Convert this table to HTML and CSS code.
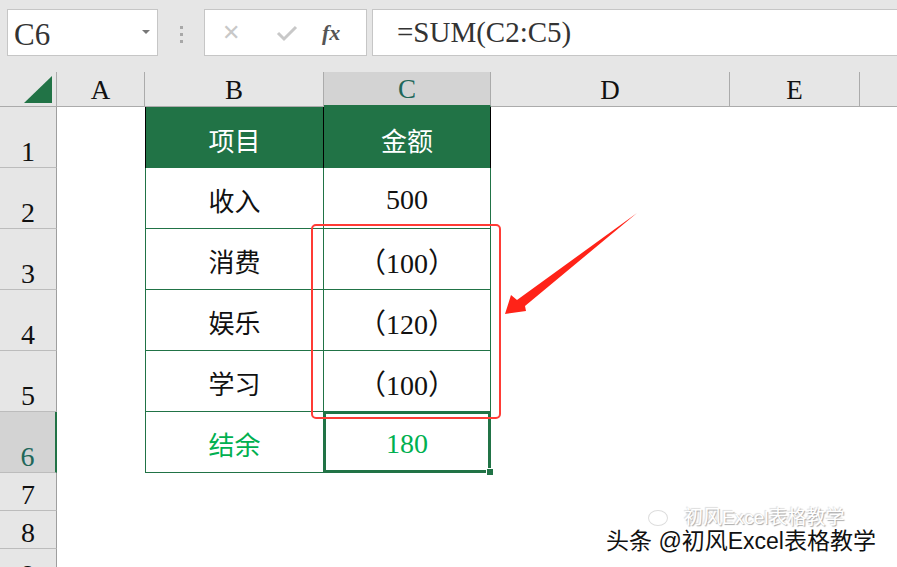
FILE: index.html
```html
<!DOCTYPE html>
<html lang="zh-CN">
<head>
  <meta charset="UTF-8">
  <title>结余 - SUM</title>
  <link rel="stylesheet" href="styles.css">
</head>
<body>

<div class="toolbar">
  <div class="name-box">
    <span>C6</span>
    <span class="caret"></span>
  </div>
  <div class="grip"><i></i><i></i><i></i></div>
  <div class="fx-box">
    <span class="fx-btn off">&#x2715;</span>
    <svg class="fx-btn" width="22" height="18" viewBox="0 0 22 18"><path d="M2 9 L8 15 L20 3" fill="none" stroke="#c8c8c8" stroke-width="3"/></svg>
    <span class="fx-label">fx</span>
  </div>
  <div class="formula">=SUM(C2:C5)</div>
</div>

<div class="sheet">
  <div class="corner"><span class="tri"></span></div>
  <div class="col-head">A</div>
  <div class="col-head">B</div>
  <div class="col-head sel">C</div>
  <div class="col-head">D</div>
  <div class="col-head">E</div>
  <div class="col-head last"></div>

  <div class="row-head">1</div>
  <div class="cell"></div>
  <div class="cell t-head t-left">项目</div>
  <div class="cell t-head">金额</div>
  <div class="cell"></div><div class="cell"></div><div class="cell"></div>

  <div class="row-head">2</div>
  <div class="cell"></div>
  <div class="cell t t-left">收入</div>
  <div class="cell t num">500</div>
  <div class="cell"></div><div class="cell"></div><div class="cell"></div>

  <div class="row-head">3</div>
  <div class="cell"></div>
  <div class="cell t t-left">消费</div>
  <div class="cell t num">（100）</div>
  <div class="cell"></div><div class="cell"></div><div class="cell"></div>

  <div class="row-head">4</div>
  <div class="cell"></div>
  <div class="cell t t-left">娱乐</div>
  <div class="cell t num">（120）</div>
  <div class="cell"></div><div class="cell"></div><div class="cell"></div>

  <div class="row-head">5</div>
  <div class="cell"></div>
  <div class="cell t t-left">学习</div>
  <div class="cell t num">（100）</div>
  <div class="cell"></div><div class="cell"></div><div class="cell"></div>

  <div class="row-head sel">6</div>
  <div class="cell"></div>
  <div class="cell t t-left green">结余</div>
  <div class="cell t num green active">180<span class="handle"></span></div>
  <div class="cell"></div><div class="cell"></div><div class="cell"></div>

  <div class="row-head">7</div>
  <div class="cell"></div><div class="cell"></div><div class="cell"></div><div class="cell"></div><div class="cell"></div><div class="cell"></div>

  <div class="row-head">8</div>
  <div class="cell"></div><div class="cell"></div><div class="cell"></div><div class="cell"></div><div class="cell"></div><div class="cell"></div>

  <div class="row-head last">9</div>
  <div class="cell"></div><div class="cell"></div><div class="cell"></div><div class="cell"></div><div class="cell"></div><div class="cell"></div>
</div>

<!-- annotations drawn over the sheet -->
<div class="mark-box"></div>
<svg class="arrow" width="897" height="567" viewBox="0 0 897 567">
  <polygon points="637,213 517,300 511,295 505,314 526,311 525,306" fill="#ff2318"/>
</svg>

<div class="watermark">
  <div class="ghost"><span class="ghost-icon"></span>初风Excel表格教学</div>
  <div class="credit">头条 @初风Excel表格教学</div>
</div>

</body>
</html>
```

FILE: styles.css
```css
html, body {
  margin: 0;
  height: 567px;
  overflow: hidden;
}

body {
  position: relative;
  background-color: #fff;
  font-family: "Liberation Serif", "Noto Sans CJK SC", serif;
}

/* Formula bar */
.toolbar {
  display: flex;
  align-items: flex-start;
  height: 72px;
  box-sizing: border-box;
  padding: 9px 0 0 7px;
  background-color: #e6e6e6;
}

.name-box {
  display: flex;
  align-items: center;
  justify-content: space-between;
  width: 151px;
  height: 47px;
  box-sizing: border-box;
  padding: 5px 7px 0 6px;
  background-color: #fff;
  border: 1px solid #c6c6c6;
  font-size: 31px;
  color: #333;
}

.caret {
  width: 0;
  height: 0;
  margin-top: -6px;
  border-left: 4px solid transparent;
  border-right: 4px solid transparent;
  border-top: 4px solid #777;
}

.grip {
  display: flex;
  flex-direction: column;
  gap: 4px;
  width: 46px;
  align-items: center;
  padding-top: 17px;
}

.grip i {
  display: block;
  width: 3px;
  height: 3px;
  background-color: #a8a8a8;
}

.fx-box {
  display: flex;
  align-items: center;
  width: 163px;
  height: 47px;
  box-sizing: border-box;
  padding-left: 17px;
  background-color: #fff;
  border: 1px solid #c6c6c6;
}

.fx-btn.off {
  width: 22px;
  font-family: "DejaVu Sans", sans-serif;
  font-size: 22px;
  color: #c8c8c8;
}

svg.fx-btn {
  margin-left: 32px;
}

.fx-label {
  margin-left: 24px;
  font-style: italic;
  font-weight: bold;
  font-size: 22px;
  color: #555;
}

.formula {
  flex: 1;
  height: 47px;
  box-sizing: border-box;
  margin-left: 5px;
  padding: 6px 0 0 24px;
  background-color: #fff;
  border: 1px solid #c6c6c6;
  border-right: none;
  font-size: 29px;
  color: #333;
}

/* Sheet grid */
.sheet {
  display: grid;
  grid-template-columns: 57px 88px 179px 167px 239px 130px 1fr;
  grid-template-rows: 35px repeat(6, 61px) repeat(3, 38px);
}

.corner {
  position: relative;
  background-color: #e6e6e6;
  border-right: 1px solid #ababab;
  border-bottom: 1px solid #ababab;
}

.tri {
  position: absolute;
  right: 4px;
  bottom: 3px;
  width: 0;
  height: 0;
  border-left: 28px solid transparent;
  border-bottom: 27px solid #217346;
}

.col-head {
  display: flex;
  align-items: flex-end;
  justify-content: center;
  padding-bottom: 2px;
  box-sizing: border-box;
  background-color: #e6e6e6;
  border-right: 1px solid #ababab;
  border-bottom: 1px solid #ababab;
  font-size: 27px;
  line-height: 1;
  color: #111;
}

.col-head.sel {
  background-color: #d3d3d3;
  border-bottom: 2px solid #217346;
  color: #21675a;
}

.col-head.last {
  border-right: none;
}

.row-head {
  display: flex;
  align-items: flex-end;
  justify-content: center;
  padding-bottom: 1px;
  box-sizing: border-box;
  background-color: #e6e6e6;
  border-right: 1px solid #9e9e9e;
  border-bottom: 1px solid #bcbcbc;
  font-size: 28px;
  line-height: 1;
  color: #111;
}

.row-head.sel {
  background-color: #d3d3d3;
  border-right: 2px solid #217346;
  color: #21675a;
}

.row-head.last {
  align-items: flex-start;
  padding: 12px 0 0;
}

/* Table cells */
.cell {
  display: flex;
  align-items: center;
  justify-content: center;
  box-sizing: border-box;
  padding-top: 3px;
  font-family: "Noto Sans CJK SC", sans-serif;
  font-size: 26px;
  color: #111;
}

.t {
  border-right: 1px solid #217346;
  border-bottom: 1px solid #217346;
}

.t-left {
  border-left: 1px solid #217346;
}

.t-head {
  background-color: #217346;
  color: #fff;
  border-right: 1px solid #000;
}

.t-head.t-left {
  border-left: 1px solid #000;
}

.t-head:last-of-type {
  border-right: none;
}

.num {
  font-family: "Liberation Serif", "Noto Sans CJK SC", serif;
  font-size: 28px;
}

.green {
  color: #00b050;
}

.active {
  position: relative;
  box-shadow: inset 0 0 0 2px #217346;
}

.handle {
  position: absolute;
  right: -4px;
  bottom: -4px;
  width: 6px;
  height: 6px;
  background-color: #217346;
  border: 1px solid #fff;
}

/* Annotations */
.mark-box {
  position: absolute;
  left: 311px;
  top: 224px;
  width: 190px;
  height: 195px;
  box-sizing: border-box;
  border: 2px solid #ff3b35;
  border-radius: 5px;
}

.arrow {
  position: absolute;
  left: 0;
  top: 0;
}

.watermark {
  position: absolute;
  left: 606px;
  top: 508px;
  font-family: "Liberation Sans", "Noto Sans CJK SC", sans-serif;
}

.ghost {
  display: flex;
  align-items: center;
  margin-left: 42px;
  font-size: 19px;
  line-height: 20px;
  color: #fff;
  text-shadow: 1px 1px 1px #aaa, -1px -1px 1px #ddd;
}

.ghost-icon {
  width: 18px;
  height: 14px;
  margin-right: 16px;
  border: 1px solid #ddd;
  border-radius: 50%;
}

.credit {
  margin-top: 0;
  font-size: 23px;
  line-height: 26px;
  color: #111;
  text-shadow: 1px 1px 0 #fff, -1px -1px 0 #fff, 1px -1px 0 #fff, -1px 1px 0 #fff;
}
```
